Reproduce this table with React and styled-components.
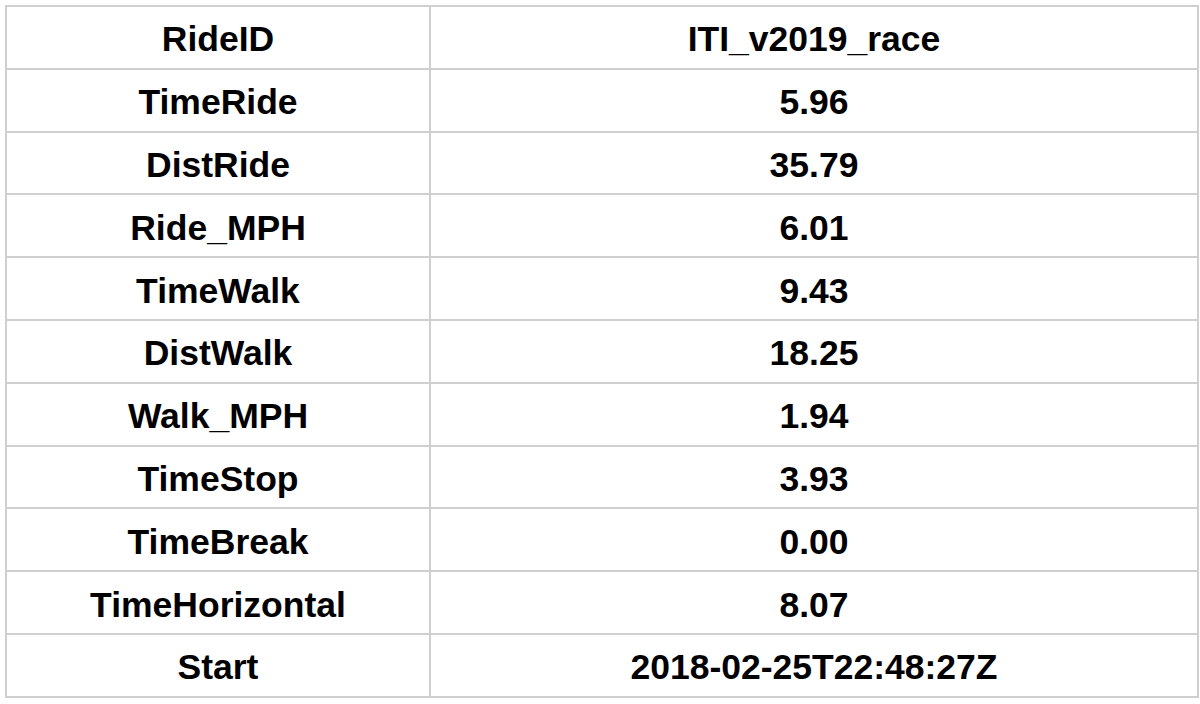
import React from "react";
import styled, { createGlobalStyle } from "styled-components";

const Global = createGlobalStyle`
  html, body { margin: 0; padding: 0; background: #ffffff; }
  body { font-family: "Liberation Sans", Arial, Helvetica, sans-serif; }
`;

const Page = styled.div`
  padding: 5px 7px 0 5px;
  width: 1200px;
  height: 704px;
  box-sizing: border-box;
`;

const Table = styled.table`
  width: 1188px;
  border-collapse: collapse;
  table-layout: fixed;
`;

const Row = styled.tr`
  height: 62.8px;
`;

const Cell = styled.td`
  border: 2px solid #cfcfcf;
  text-align: center;
  vertical-align: middle;
  font-size: 35.5px;
  line-height: 40px;
  font-weight: 700;
  color: #000;
  padding: 4px 0 0 0;
  width: ${(p) => p.$w}px;
`;

const rows = [
  ["RideID", "ITI_v2019_race"],
  ["TimeRide", "5.96"],
  ["DistRide", "35.79"],
  ["Ride_MPH", "6.01"],
  ["TimeWalk", "9.43"],
  ["DistWalk", "18.25"],
  ["Walk_MPH", "1.94"],
  ["TimeStop", "3.93"],
  ["TimeBreak", "0.00"],
  ["TimeHorizontal", "8.07"],
  ["Start", "2018-02-25T22:48:27Z"],
];

export default function App() {
  return (
    <>
      <Global />
      <Page>
        <Table>
          <tbody>
            {rows.map(([k, v]) => (
              <Row key={k}>
                <Cell $w={422}>{k}</Cell>
                <Cell $w={766}>{v}</Cell>
              </Row>
            ))}
          </tbody>
        </Table>
      </Page>
    </>
  );
}
